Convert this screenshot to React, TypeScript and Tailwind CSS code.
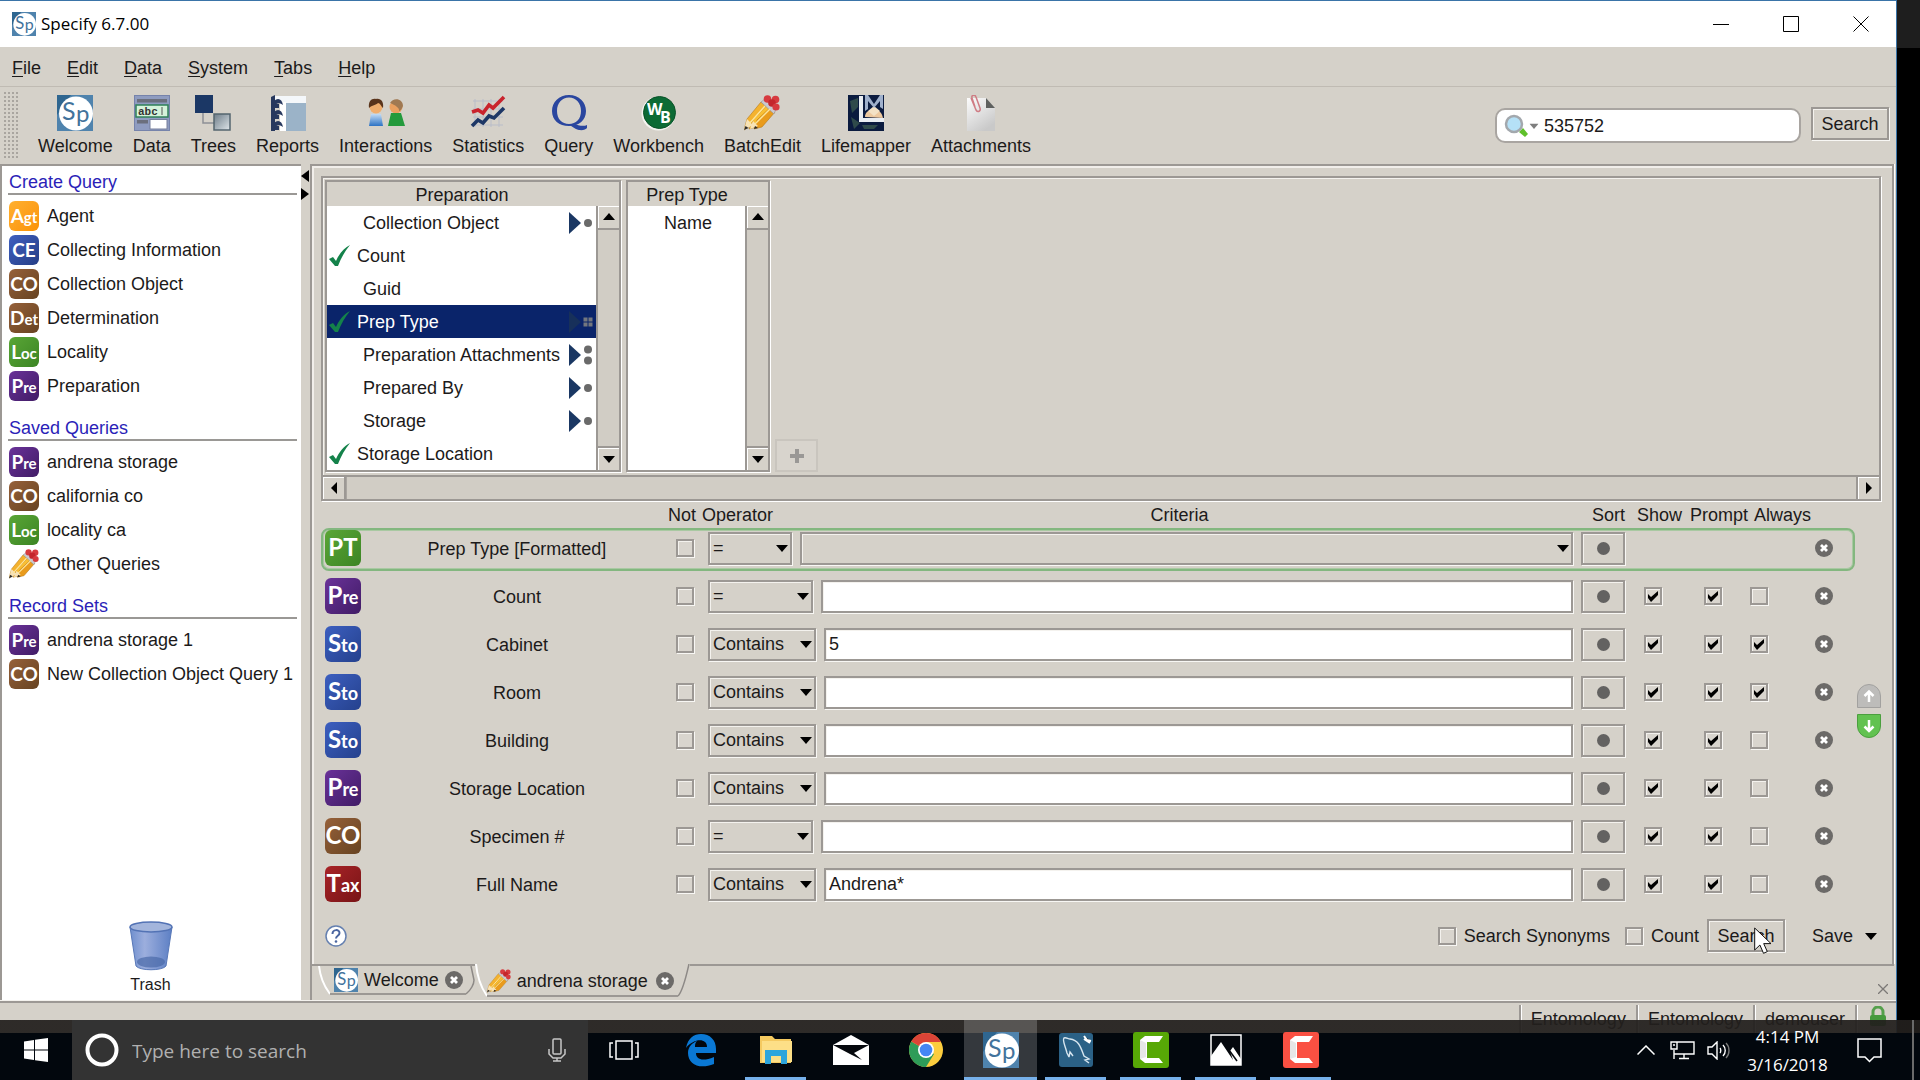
import { useState } from 'react'
import type { ReactNode } from 'react'

type BadgeKind = 'Agt' | 'CE' | 'CO' | 'Det' | 'Loc' | 'Pre' | 'PT' | 'Sto' | 'Tax'

interface SideItem {
  label: string
  badge?: BadgeKind
}

interface QueryField {
  badge: BadgeKind
  label: string
  operator: string
  width: string
  criteria: string
  show: boolean
  prompt: boolean
  always: boolean
}

const BEVEL = 'border-2 border-[#9c9894] shadow-[inset_1px_1px_0_#f4f2ee,1px_1px_0_#f8f7f4]'

const BADGE_COLORS: Record<BadgeKind, string> = {
  Agt: 'from-[#ffb02e] to-[#fb9200]',
  CE: 'from-[#3f5fc0] to-[#263f86]',
  CO: 'from-[#96613a] to-[#674321]',
  Det: 'from-[#96613a] to-[#674321]',
  Loc: 'from-[#5aa636] to-[#3c8524]',
  Pre: 'from-[#6a3299] to-[#411c66]',
  PT: 'from-[#5aa636] to-[#3c8524]',
  Sto: 'from-[#3c5fc0] to-[#25418d]',
  Tax: 'from-[#a82327] to-[#781416]',
}

const SIDE_SECTIONS: { title: string; items: SideItem[] }[] = [
  {
    title: 'Create Query',
    items: [
      { label: 'Agent', badge: 'Agt' },
      { label: 'Collecting Information', badge: 'CE' },
      { label: 'Collection Object', badge: 'CO' },
      { label: 'Determination', badge: 'Det' },
      { label: 'Locality', badge: 'Loc' },
      { label: 'Preparation', badge: 'Pre' },
    ],
  },
  {
    title: 'Saved Queries',
    items: [
      { label: 'andrena storage', badge: 'Pre' },
      { label: 'california co', badge: 'CO' },
      { label: 'locality ca', badge: 'Loc' },
      { label: 'Other Queries' },
    ],
  },
  {
    title: 'Record Sets',
    items: [
      { label: 'andrena storage 1', badge: 'Pre' },
      { label: 'New Collection Object Query 1', badge: 'CO' },
    ],
  },
]

const TREE_FIELDS = [
  { label: 'Collection Object', used: false, link: 'one' },
  { label: 'Count', used: true, link: '' },
  { label: 'Guid', used: false, link: '' },
  { label: 'Prep Type', used: true, link: 'selected' },
  { label: 'Preparation Attachments', used: false, link: 'many' },
  { label: 'Prepared By', used: false, link: 'one' },
  { label: 'Storage', used: false, link: 'one' },
  { label: 'Storage Location', used: true, link: '' },
]

const QUERY_FIELDS: QueryField[] = [
  { badge: 'Pre', label: 'Count', operator: '=', width: 'w-[105px]', criteria: '', show: true, prompt: true, always: false },
  { badge: 'Sto', label: 'Cabinet', operator: 'Contains', width: 'w-[108px]', criteria: '5', show: true, prompt: true, always: true },
  { badge: 'Sto', label: 'Room', operator: 'Contains', width: 'w-[108px]', criteria: '', show: true, prompt: true, always: true },
  { badge: 'Sto', label: 'Building', operator: 'Contains', width: 'w-[108px]', criteria: '', show: true, prompt: true, always: false },
  { badge: 'Pre', label: 'Storage Location', operator: 'Contains', width: 'w-[108px]', criteria: '', show: true, prompt: true, always: false },
  { badge: 'CO', label: 'Specimen #', operator: '=', width: 'w-[105px]', criteria: '', show: true, prompt: true, always: false },
  { badge: 'Tax', label: 'Full Name', operator: 'Contains', width: 'w-[108px]', criteria: 'Andrena*', show: true, prompt: true, always: false },
]

function SpecifyLogo({ className }: { className: string }) {
  return (
    <svg viewBox="0 0 36 36" className={className} aria-hidden="true">
      <rect width="36" height="36" fill="#4f83ad" />
      <path d="M0 0h14L0 20z" fill="#2f6690" />
      <circle cx="19" cy="18.500" r="17" fill="#fff" />
      <text x="5" y="25" fontFamily="Lato, sans-serif" fontSize="25" fontWeight="400" fill="#42739c">
        S
      </text>
      <text x="19" y="27" fontFamily="Lato, sans-serif" fontSize="24" fontWeight="400" fill="#42739c">
        p
      </text>
    </svg>
  )
}

function PencilsIcon({ className }: { className: string }) {
  return (
    <svg viewBox="0 0 36 36" className={className} aria-hidden="true">
      <g stroke="#b5791a" strokeWidth=".6">
        <path d="M0 35l3-11L17 7l6 5L8 30z" fill="#f4b22e" />
        <path d="M5 34l4-9L24 9l6 5L15 31z" fill="#f9bf33" />
        <path d="M10 34l3-9L27 12l4 5L18 32z" fill="#e99b1c" />
      </g>
      <path d="M3 24l6 6-9 5zM9 26l5 5-8 3z" fill="#f7e2b6" />
      <path d="M0 35l1.500-4 3 2zM10 34l1-3 3 2z" fill="#2b2b2b" />
      <path d="M17 7l4-3 11 10-2 5z" fill="#c9c9cf" stroke="#8b8b93" strokeWidth=".5" />
      <path d="M5 29L21 11M11 29L26 14" stroke="#fde59a" strokeWidth="1.500" />
      <circle cx="23.500" cy="4" r="3.800" fill="#d73a3f" />
      <circle cx="31.500" cy="4.500" r="3.800" fill="#d73a3f" />
      <circle cx="28" cy="8" r="3.800" fill="#c4262d" />
      <circle cx="32" cy="12" r="3.600" fill="#d73a3f" />
    </svg>
  )
}

function DataIcon() {
  return (
    <svg viewBox="0 0 36 36" className="size-9" aria-hidden="true">
      <rect x=".5" y=".5" width="35" height="35" fill="#8f9cc0" stroke="#7683ab" />
      <rect x="3" y="4" width="30" height="3.500" fill="#6b6f7d" />
      <rect x="2" y="10" width="32" height="12" fill="#d5f3da" stroke="#2f8058" strokeWidth="1.500" />
      <text x="4" y="20" fontFamily="Liberation Mono, monospace" fontSize="11" fontWeight="700" fill="#333">
        abc
      </text>
      <path d="M28 12v8" stroke="#555" />
      <rect x="3" y="25" width="11" height="3.500" fill="#6b6f7d" />
      <rect x="16" y="24.500" width="17" height="9.500" fill="#fff" stroke="#777f9c" />
    </svg>
  )
}

function TreesIcon() {
  return (
    <svg viewBox="0 0 36 36" className="size-9" aria-hidden="true">
      <defs>
        <linearGradient id="tree-node" x2="1" y2="1">
          <stop stopColor="#6d7c88" />
          <stop offset="1" stopColor="#dfe6ea" />
        </linearGradient>
      </defs>
      <path d="M8 18v10h11" fill="none" stroke="#8d9096" strokeWidth="1.500" />
      <rect width="18" height="18" fill="#1b3765" />
      <rect x="19" y="19" width="16" height="16" fill="url(#tree-node)" stroke="#54656f" strokeWidth="1.500" />
    </svg>
  )
}

function ReportsIcon() {
  return (
    <svg viewBox="0 0 36 36" className="size-9" aria-hidden="true">
      <path d="M4 1h32v7H4z" fill="#f4f7fa" />
      <path d="M10 7h6v29h-6z" fill="#fff" />
      <path d="M16 8h20v28H16z" fill="#9bb3c8" />
      <path d="M1 2l4-2v36H1z" fill="#27385e" />
      <path d="M4 6c4-4 8-2 9 4-4-3-6-2-9 1zM4 17c4-4 8-2 9 4-4-3-6-2-9 1zM4 28c4-4 8-2 9 4-4-3-6-2-9 1z" fill="#27385e" />
      <path d="M4 9h5v4H4zM4 20h5v4H4zM4 31h5v4H4z" fill="#27385e" />
    </svg>
  )
}

function InteractionsIcon() {
  return (
    <svg viewBox="0 0 40 36" className="h-9 w-10" aria-hidden="true">
      <defs>
        <linearGradient id="person-blue" y2="1" x2="0">
          <stop stopColor="#c3dcf5" />
          <stop offset="1" stopColor="#2c72c4" />
        </linearGradient>
      </defs>
      <circle cx="10" cy="12" r="6.500" fill="#f0ad6c" />
      <path d="M3 13c-1-7 3-10 7-9 5-1 8 3 7 9-2-2-3-5-5-5-2 2-6 2-9 5z" fill="#5a341b" />
      <path d="M5 19h10l2 12H3z" fill="url(#person-blue)" />
      <circle cx="30" cy="12" r="6.500" fill="#e9a060" />
      <path d="M24 8c3-6 13-5 13 3-1 3-3 5-4 5 1-3-4-6-9-8z" fill="#a07952" />
      <path d="M25 18h10l4 13H22z" fill="#249a3c" />
    </svg>
  )
}

function StatisticsIcon() {
  return (
    <svg viewBox="0 0 36 36" className="size-9" aria-hidden="true">
      <path d="M3 6h30M3 14h30M3 22h30M3 30h30M5 4v28M13 4v28M21 4v28M29 4v28" stroke="#b9bdc9" />
      <path d="M2 17l6-2 5 3 6-8 4 3 11-11" fill="none" stroke="#c9232d" strokeWidth="3.600" />
      <path d="M2 31l6-6 5 3 6-7 5 2 10-10" fill="none" stroke="#1d3766" strokeWidth="3.600" />
    </svg>
  )
}

function QueryIcon() {
  return (
    <svg viewBox="0 0 36 36" className="size-9" aria-hidden="true">
      <path
        d="M18 0c10 0 17 7 17 16S28 31 18 31 1 25 1 16 8 0 18 0zm0 2.500C11 2.500 6 8 6 16s5 13 12 13 12-5 12-13S25 2.500 18 2.500z"
        fill="#2a469f"
        fillRule="evenodd"
      />
      <path d="M12 30c6-3 10 4 16 5 4 .5 7-.5 8-2v-3c-4 2-9 0-13-1z" fill="#2a469f" />
    </svg>
  )
}

function WorkbenchIcon() {
  return (
    <svg viewBox="0 0 36 36" className="size-9" aria-hidden="true">
      <circle cx="17.500" cy="18.500" r="17" fill="#f4f4f0" />
      <circle cx="18.500" cy="17.500" r="16" fill="#0c6b35" stroke="#0a5228" />
      <text x="6" y="20" fontFamily="Open Sans, sans-serif" fontSize="16" fontWeight="700" fill="#fff">
        W
      </text>
      <text x="19" y="28" fontFamily="Open Sans, sans-serif" fontSize="16" fontWeight="700" fill="#fff">
        B
      </text>
    </svg>
  )
}

function LifemapperIcon() {
  return (
    <svg viewBox="0 0 36 36" className="size-9" aria-hidden="true">
      <rect width="36" height="36" fill="#0b1b3f" />
      <path d="M2 6l8-3v9l-6 6zM3 22l9 6-6 6zM14 30h16l-4 4H16z" fill="#2f4a4a" />
      <path d="M17 22c0-5 5-8 9-6 5-2 8 2 9 7z" fill="#edc9a0" />
      <path d="M20 16l6-5 6 5-6 5z" fill="#f4e2c6" />
      <path d="M11 1h4v22h21v4H11z" fill="#e9edf2" />
      <path d="M17 0h3l6 9 6-9h3v14l-3-2V6l-6 7-6-7v8l-3 2z" fill="#9fb0cc" />
    </svg>
  )
}

function AttachmentsIcon() {
  return (
    <svg viewBox="0 0 36 36" className="size-9" aria-hidden="true">
      <defs>
        <linearGradient id="sheet" x2=".6" y2="1">
          <stop stopColor="#fcfcfc" />
          <stop offset="1" stopColor="#c9c9c9" />
        </linearGradient>
      </defs>
      <path d="M4 3h19l9 10v23H4z" fill="url(#sheet)" />
      <path d="M23 3l9 10h-9z" fill="#5e605e" />
      <path d="M8 3l5 12c2 3 5 1 4-2L13 2c-1-3-5-2-4 1l3 9" fill="none" stroke="#cf7c84" strokeWidth="1.500" />
    </svg>
  )
}

const TOOLS: { label: string; icon: ReactNode }[] = [
  { label: 'Welcome', icon: <SpecifyLogo className="size-9" /> },
  { label: 'Data', icon: <DataIcon /> },
  { label: 'Trees', icon: <TreesIcon /> },
  { label: 'Reports', icon: <ReportsIcon /> },
  { label: 'Interactions', icon: <InteractionsIcon /> },
  { label: 'Statistics', icon: <StatisticsIcon /> },
  { label: 'Query', icon: <QueryIcon /> },
  { label: 'Workbench', icon: <WorkbenchIcon /> },
  { label: 'BatchEdit', icon: <PencilsIcon className="size-9" /> },
  { label: 'Lifemapper', icon: <LifemapperIcon /> },
  { label: 'Attachments', icon: <AttachmentsIcon /> },
]

function Badge({ kind, large }: { kind: BadgeKind; large?: boolean }) {
  const allCaps = kind === 'CO' || kind === 'CE' || kind === 'PT'
  const size = large ? 'size-9 text-[24px]' : 'size-[30px] text-[19px]'
  const rest = large ? 'text-[18px]' : 'text-[15px]'
  return (
    <span
      className={`flex shrink-0 items-center justify-center overflow-hidden rounded-md bg-linear-to-br pb-0.5 font-[Lato,sans-serif] leading-none font-bold text-white ${size} ${BADGE_COLORS[kind]}`}
      aria-hidden="true"
    >
      <span>
        {kind[0]}
        <span className={allCaps ? '' : rest}>{kind.slice(1)}</span>
      </span>
    </span>
  )
}

function Triangle({ dir, className = '' }: { dir: 'up' | 'down' | 'left' | 'right'; className?: string }) {
  const paths = { up: 'M0 9l6-7 6 7z', down: 'M0 3h12l-6 7z', left: 'M9 0v12L3 6z', right: 'M3 0v12l6-6z' }
  return (
    <svg viewBox="0 0 12 12" className={`size-3 ${className}`} aria-hidden="true">
      <path d={paths[dir]} fill="#000" />
    </svg>
  )
}

function CloseGlyph() {
  return (
    <svg viewBox="0 0 18 18" className="size-[18px]" aria-hidden="true">
      <circle cx="9" cy="9" r="9" fill="#6c6a68" />
      <path d="M6 6l6 6M12 6l-6 6" stroke="#fff" strokeWidth="2.800" />
    </svg>
  )
}

function CheckBox({ label, defaultChecked }: { label: string; defaultChecked?: boolean }) {
  return (
    <span className="grid shrink-0">
      <input
        type="checkbox"
        aria-label={label}
        defaultChecked={defaultChecked}
        className={`peer col-start-1 row-start-1 size-[18px] appearance-none bg-[#d9d5ce] ${BEVEL}`}
      />
      <svg
        viewBox="0 0 18 18"
        className="pointer-events-none col-start-1 row-start-1 hidden size-[18px] peer-checked:block"
        aria-hidden="true"
      >
        <path d="M4 7l3 3 7-6v4l-7 7-3-4z" fill="#000" />
      </svg>
    </span>
  )
}

function Combo({ label, value, className }: { label: string; value: string; className: string }) {
  return (
    <span className={`grid items-center ${className}`}>
      <select
        aria-label={label}
        defaultValue={value}
        className={`col-start-1 row-start-1 h-[33px] w-full appearance-none bg-[#d5d1c9] pl-[3px] ${BEVEL}`}
      >
        <option>{value}</option>
      </select>
      <Triangle dir="down" className="pointer-events-none col-start-1 row-start-1 mr-1 justify-self-end" />
    </span>
  )
}

function SortButton() {
  return (
    <button
      type="button"
      aria-label="Sort"
      className={`ml-2 flex h-[33px] w-11 shrink-0 items-center justify-center ${BEVEL}`}
    >
      <span className="size-[13px] rounded-full bg-[#636261]" />
    </button>
  )
}

function QueryRow({ field }: { field: QueryField }) {
  return (
    <div className="flex h-[43px] items-start border-2 border-transparent">
      <div className="flex h-9 flex-1 items-center pl-0.5">
        <Badge kind={field.badge} large />
        <span className="w-[315px] pt-0.5 pr-[3px] text-center">{field.label}</span>
        <CheckBox label={`Not ${field.label}`} />
        <Combo label="Operator" value={field.operator} className={`ml-3.5 shrink-0 ${field.width}`} />
        <input
          type="text"
          aria-label={`${field.label} criteria`}
          defaultValue={field.criteria}
          className={`ml-2 h-[33px] min-w-0 flex-1 bg-white px-[3px] ${BEVEL}`}
        />
        <SortButton />
        <div className="ml-[19px] flex">
          <CheckBox label="Show" defaultChecked={field.show} />
        </div>
        <div className="ml-[42px] flex">
          <CheckBox label="Prompt" defaultChecked={field.prompt} />
        </div>
        <div className="ml-7 flex">
          <CheckBox label="Always" defaultChecked={field.always} />
        </div>
        <button type="button" aria-label="Remove" className="mr-5 ml-[47px]">
          <CloseGlyph />
        </button>
      </div>
    </div>
  )
}

function LinkMark({ kind }: { kind: string }) {
  if (!kind) return null
  const selected = kind === 'selected'
  return (
    <svg viewBox="0 0 24 22" className="h-[22px] w-6 shrink-0" aria-hidden="true">
      <path d="M0 0l12 11L0 22z" fill={selected ? '#17305a' : '#1a3763'} />
      {kind === 'one' && <circle cx="19" cy="11" r="4" fill="#6a6a6a" />}
      {kind === 'many' && (
        <>
          <circle cx="19" cy="5.500" r="4" fill="#6a6a6a" />
          <circle cx="19" cy="16.500" r="4" fill="#6a6a6a" />
        </>
      )}
      {selected && <path d="M14.500 6.500h4v4h-4zM19.500 6.500h4v4h-4zM14.500 11.500h4v4h-4zM19.500 11.500h4v4h-4z" fill="#73777f" />}
    </svg>
  )
}

function VScroll() {
  return (
    <div className="flex w-[23px] flex-col border-l-2 border-[#9c9894]">
      <button type="button" aria-label="Scroll up" className="flex h-6 items-center justify-center border-b-2 border-[#9c9894] shadow-[inset_1px_1px_0_#fff]">
        <Triangle dir="up" />
      </button>
      <div className="flex-1 bg-[#d1cdc5]" />
      <button type="button" aria-label="Scroll down" className="flex h-6 items-center justify-center border-t-2 border-[#9c9894] shadow-[inset_1px_1px_0_#fff]">
        <Triangle dir="down" />
      </button>
    </div>
  )
}

function FieldTree() {
  const [selected, setSelected] = useState('Prep Type')
  return (
    <section className="border-2 border-[#9c9894] shadow-[inset_1px_1px_0_#f4f2ee,1px_1px_0_#fff]">
      <div className="flex gap-[5px] p-[2px]">
        <div className="flex w-[296px] flex-col border-2 border-[#9c9894] shadow-[1px_1px_0_#fff]">
          <h2 className="h-6 pr-[22px] text-center leading-[26px]">Preparation</h2>
          <div className="flex flex-1">
            <ul className="flex-1 bg-white">
              {TREE_FIELDS.map((f) => (
                <li key={f.label}>
                  <button
                    type="button"
                    onClick={() => setSelected(f.label)}
                    className={`flex h-[33px] w-full items-center pr-[3px] pl-0.5 whitespace-nowrap ${
                      f.label === selected ? 'bg-[#0a246a] text-white' : ''
                    }`}
                  >
                    {f.used ? (
                      <svg viewBox="0 0 22 22" className="mr-1.5 size-[22px] shrink-0" aria-hidden="true">
                        <path d="M0 14l4-2 3 4C10 9 15 3 21 0c-5 6-9 13-12 21H6z" fill="#14824a" />
                      </svg>
                    ) : (
                      <span className="w-[34px] shrink-0" />
                    )}
                    <span className="flex-1 text-left">{f.label}</span>
                    <LinkMark kind={f.link} />
                  </button>
                </li>
              ))}
            </ul>
            <VScroll />
          </div>
        </div>
        <div className="flex w-[144px] flex-col border-2 border-[#9c9894] shadow-[1px_1px_0_#fff]">
          <h2 className="h-6 pr-[22px] text-center leading-[26px]">Prep Type</h2>
          <div className="flex flex-1">
            <ul className="flex-1 bg-white">
              <li className="flex h-[33px] items-center pl-9">Name</li>
            </ul>
            <VScroll />
          </div>
        </div>
        <button
          type="button"
          aria-label="Add field"
          disabled
          className="flex h-[33px] w-[43px] items-center justify-center self-end border-2 border-[#c9c5be] bg-[#d8d4cd]"
        >
          <svg viewBox="0 0 14 14" className="size-3.5" aria-hidden="true">
            <path d="M5 0h4v5h5v4H9v5H5V9H0V5h5z" fill="#9a9896" />
          </svg>
        </button>
      </div>
      <div className="mt-px flex h-6 border-t-2 border-[#9c9894]">
        <button type="button" aria-label="Scroll left" className="flex w-[23px] items-center justify-center border-r-2 border-[#9c9894] shadow-[inset_1px_1px_0_#fff]">
          <Triangle dir="left" />
        </button>
        <div className="flex-1 border-l border-[#a9a5a0] bg-[#d1cdc5]" />
        <button type="button" aria-label="Scroll right" className="flex w-[23px] items-center justify-center border-l-2 border-[#9c9894] shadow-[inset_1px_1px_0_#fff]">
          <Triangle dir="right" />
        </button>
      </div>
    </section>
  )
}

function QueryForm() {
  return (
    <div className="flex flex-1">
      <div className="flex flex-1 flex-col">
        <div className="flex h-[27px] items-center whitespace-nowrap">
          <span className="ml-[347px]">Not</span>
          <span className="ml-1.5">Operator</span>
          <span className="flex-1 pl-1.5 text-center">Criteria</span>
          <span className="ml-3">Sort</span>
          <span className="ml-3">Show</span>
          <span className="ml-2">Prompt</span>
          <span className="mr-[44px] ml-1.5">Always</span>
        </div>
        <div className="flex flex-col gap-[5px]">
          <div className="flex h-[43px] items-start rounded-lg border-2 border-[#83b77f] shadow-[inset_0_0_0_1px_#a9c9a2]">
            <div className="flex h-9 flex-1 items-center pl-0.5">
              <Badge kind="PT" large />
              <span className="w-[315px] pt-0.5 pr-[3px] text-center">Prep Type [Formatted]</span>
              <CheckBox label="Not Prep Type" />
              <Combo label="Operator" value="=" className="ml-3.5 w-[84px] shrink-0" />
              <Combo label="Prep Type criteria" value="" className="ml-2 flex-1" />
              <SortButton />
              <button type="button" aria-label="Remove" className="mr-5 ml-[190px]">
                <CloseGlyph />
              </button>
            </div>
          </div>
          {QUERY_FIELDS.map((f) => (
            <QueryRow key={f.label} field={f} />
          ))}
        </div>
      </div>
      <div className="flex w-[26px] flex-col items-end justify-center gap-1.5 pt-3.5">
        <button type="button" aria-label="Move up">
          <svg viewBox="0 0 24 24" className="size-6">
            <path d="M.5 23.500V12a11.500 11.500 0 0 1 23 0v11.500z" fill="#bdbcba" stroke="#a2a19f" />
            <path d="M12 18V8M7.500 12L12 7.500l4.500 4.500" fill="none" stroke="#fff" strokeWidth="2.500" />
          </svg>
        </button>
        <button type="button" aria-label="Move down">
          <svg viewBox="0 0 24 24" className="size-6">
            <path d="M.5.5V12a11.500 11.500 0 0 0 23 0V.5z" fill="#62c250" stroke="#4b9f3e" />
            <path d="M12 6v11M7.500 12.500L12 17l4.500-4.500" fill="none" stroke="#fff" strokeWidth="2.500" />
          </svg>
        </button>
      </div>
    </div>
  )
}

function FormFooter() {
  return (
    <div className="flex h-[57px] items-center pr-1">
      <button type="button" aria-label="Help" className="ml-1">
        <svg viewBox="0 0 22 22" className="size-[22px]">
          <circle cx="11" cy="11" r="10" fill="#fff" stroke="#6580b0" strokeWidth="1.500" />
          <path d="M7.500 9c0-5 7-5 7-1 0 3-3.500 2.500-3.500 5.500" fill="none" stroke="#4a65a0" strokeWidth="2" />
          <circle cx="11" cy="16.500" r="1.300" fill="#4a65a0" />
        </svg>
      </button>
      <label className="ml-auto flex items-center gap-2">
        <CheckBox label="Search Synonyms" />
        Search Synonyms
      </label>
      <label className="ml-[15px] flex items-center gap-2">
        <CheckBox label="Count" />
        Count
      </label>
      <div className="relative ml-2">
        <button type="button" className={`h-[33px] w-[78px] ${BEVEL}`}>
          Search
        </button>
        <svg viewBox="0 0 18 27" className="pointer-events-none absolute top-2 left-[47px] h-[27px] w-[18px]" aria-hidden="true">
          <path d="M.7 1v22l5.200-5 3.600 8.300 3.800-1.700-3.600-8h7.300z" fill="#fff" stroke="#111" />
        </svg>
      </div>
      <button type="button" className="ml-[27px] flex items-center gap-3">
        Save
        <Triangle dir="down" />
      </button>
    </div>
  )
}

function TabStrip() {
  return (
    <div className="flex h-[37px] items-start">
      <span className="w-1.5 border-t-2 border-[#9c9894]" />
      <div className="flex h-[31px] border-t-2 border-[#9c9894]">
        <svg viewBox="0 0 12 29" className="h-[29px] w-3" aria-hidden="true">
          <path d="M1 0c1 9 4 19 11 28" fill="none" stroke="#fff" strokeWidth="2" />
        </svg>
        <div className="flex items-center border-b-2 border-[#9c9894] pr-[3px] pl-1">
          <button type="button" className="flex items-center gap-1.5">
            <SpecifyLogo className="size-6" />
            Welcome
          </button>
          <button type="button" aria-label="Close Welcome" className="ml-1.5">
            <CloseGlyph />
          </button>
        </div>
        <svg viewBox="0 0 9 29" className="h-[29px] w-[9px]" aria-hidden="true">
          <path d="M0 28c5-4 8-10 8-14L5 0" fill="none" stroke="#8d8986" strokeWidth="1.500" />
        </svg>
      </div>
      <div className="flex h-[33px]">
        <svg viewBox="0 0 12 33" className="h-[33px] w-3" aria-hidden="true">
          <path d="M1 0c1 11 4 22 11 32" fill="none" stroke="#fff" strokeWidth="2" />
        </svg>
        <div className="flex items-center border-b-2 border-[#9c9894] pt-0.5 pr-1">
          <button type="button" className="flex items-center gap-1.5">
            <PencilsIcon className="size-6" />
            andrena storage
          </button>
          <button type="button" aria-label="Close andrena storage" className="ml-2">
            <CloseGlyph />
          </button>
        </div>
        <svg viewBox="0 0 12 33" className="h-[33px] w-3" aria-hidden="true">
          <path d="M0 32c5-5 8-19 11-32" fill="none" stroke="#8d8986" strokeWidth="1.500" />
        </svg>
      </div>
      <div className="flex h-9 flex-1 items-end justify-end border-t-2 border-[#9c9894] pr-1.5 pb-1.5">
        <button type="button" aria-label="Close tab">
          <svg viewBox="0 0 10 10" className="size-2.5">
            <path d="M0 0l10 10M10 0L0 10" stroke="#7c7977" strokeWidth="1.300" />
          </svg>
        </button>
      </div>
    </div>
  )
}

function Sidebar() {
  return (
    <aside className="flex w-[301px] shrink-0 flex-col border-t-2 border-l-2 border-[#9c9894] bg-white pt-[3px] pr-1 pl-1.5 whitespace-nowrap">
      {SIDE_SECTIONS.map((section) => (
        <section key={section.title} className="pb-3.5">
          <h2 className="h-[26px] border-b-2 border-[#9a9895] pl-px leading-[26px] text-[#2b1fb8]">{section.title}</h2>
          <ul className="flex flex-col gap-1 pt-1.5 pl-px">
            {section.items.map((item) => (
              <li key={item.label}>
                <a href="#" className="flex items-center gap-2">
                  {item.badge ? <Badge kind={item.badge} /> : <PencilsIcon className="size-[30px]" />}
                  {item.label}
                </a>
              </li>
            ))}
          </ul>
        </section>
      ))}
      <a href="#" className="mt-auto mr-1 mb-1 flex flex-col items-center gap-0.5 text-base">
        <svg viewBox="0 0 44 50" className="h-[50px] w-11" aria-hidden="true">
          <defs>
            <linearGradient id="bin" x2="1">
              <stop stopColor="#6f8fce" />
              <stop offset=".35" stopColor="#9caedd" />
              <stop offset="1" stopColor="#5c7fc4" />
            </linearGradient>
          </defs>
          <path d="M1 6l6 39c4 5 26 5 30 0l6-39z" fill="url(#bin)" stroke="#5878b8" />
          <ellipse cx="22" cy="41" rx="14" ry="5.500" fill="#4a69a8" opacity=".7" />
          <ellipse cx="22" cy="6" rx="21" ry="5" fill="#a3b5dc" stroke="#5373b5" strokeWidth="1.500" />
        </svg>
        Trash
      </a>
    </aside>
  )
}

function TaskItem({ label, open, active, children }: { label: string; open?: boolean; active?: boolean; children: ReactNode }) {
  return (
    <button
      type="button"
      aria-label={label}
      className={`flex w-[73px] flex-col items-center ${active ? 'bg-white/20' : ''}`}
    >
      <span className="flex flex-1 items-center pt-0.5">{children}</span>
      <span className={`h-[3px] ${active ? 'w-full' : 'w-[61px]'} ${open ? 'bg-[#76b0ea]' : ''}`} />
    </button>
  )
}

function CamtasiaIcon({ color }: { color: string }) {
  return (
    <svg viewBox="0 0 36 36" className="size-9" aria-hidden="true">
      <rect width="36" height="36" rx="3" fill={color} />
      <path d="M7 8l5-4h18l-4 6H14v16h12l4 5H12l-5-4z" fill="#fff" />
      <path d="M7 8l6 3v14l-6 2z" fill="#e6e6e6" />
    </svg>
  )
}

function Taskbar() {
  return (
    <footer className="relative -mt-[13px] flex h-[60px] bg-[linear-gradient(#221f1dee_13px,#02070d_13px)] font-['Open_Sans','Noto_Sans',sans-serif] text-white">
      <button type="button" aria-label="Start" className="flex w-[72px] items-center justify-center">
        <svg viewBox="0 0 24 24" className="size-6">
          <path d="M0 3.500L10 2v9.500H0zM11 1.800L24 0v11.500H11zM0 12.500h10V22L0 20.500zM11 12.500h13V24l-13-1.800z" fill="#fff" />
        </svg>
      </button>
      <label className="flex w-[516px] items-center bg-[#333]">
        <svg viewBox="0 0 34 34" className="ml-[13px] size-[34px]" aria-hidden="true">
          <circle cx="17" cy="17" r="14.500" fill="none" stroke="#fff" strokeWidth="4" />
        </svg>
        <input
          type="text"
          aria-label="Type here to search"
          placeholder="Type here to search"
          className="ml-[13px] min-w-0 flex-1 bg-transparent pt-0.5 text-[19px] placeholder:text-[#b0b0b0]"
        />
        <svg viewBox="0 0 18 24" className="mr-[22px] h-6 w-[18px]" fill="none" stroke="#c8c8c8" strokeWidth="1.500" aria-hidden="true">
          <rect x="5" y="1" width="8" height="15" rx="1" />
          <path d="M1 11v5l4 4h8l4-4v-5M9 20v3M5 23h8" />
        </svg>
      </label>
      <button type="button" aria-label="Task View" className="mr-1 flex w-[72px] items-center justify-center">
        <svg viewBox="0 0 30 20" className="h-5 w-[30px]" fill="none" stroke="#fff" strokeWidth="1.500">
          <path d="M7 1h16v18H7zM4 3H1v14h3M26 3h3v14h-3" />
        </svg>
      </button>
      <div className="flex gap-[2px]">
        <TaskItem label="Edge">
          <svg viewBox="0 0 32 34" className="h-[34px] w-8">
            <path d="M1 15C3 5 9 1 16 1c9 0 15 6 15 15v4H11c0 6 6 9 18 4v7c-15 6-26 0-26-11 0-6 4-10 9-12-2 2-2 4-2 6h12c0-9-13-9-21 1z" fill="#0a78d4" />
          </svg>
        </TaskItem>
        <TaskItem label="File Explorer" open>
          <svg viewBox="0 0 32 28" className="h-7 w-8">
            <path d="M0 0h12l3 3h16v24H0z" fill="#f5ca61" />
            <path d="M2 5h30v21H2z" fill="#fddf87" />
            <path d="M5 14h22v14h-6v-8H11v8H5z" fill="#2ea5dc" />
          </svg>
        </TaskItem>
        <TaskItem label="Mail">
          <svg viewBox="0 0 36 30" className="h-[30px] w-9">
            <path d="M0 10L18 0l18 10v20H0z" fill="#fff" />
            <path d="M0 10h36L21 18l8 7-12-6z" fill="#05080d" />
          </svg>
        </TaskItem>
        <TaskItem label="Chrome">
          <svg viewBox="0 0 34 34" className="size-[34px]">
            <circle cx="17" cy="17" r="17" fill="#fccd3e" />
            <path d="M17 17L2.300 8.500A17 17 0 0 0 17 34l8-13z" fill="#2e9c58" />
            <path d="M2.300 8.500A17 17 0 0 1 32 9H17v8z" fill="#dc4437" />
            <circle cx="17" cy="17" r="8" fill="#fff" />
            <circle cx="17" cy="17" r="6.300" fill="#4486f4" />
          </svg>
        </TaskItem>
        <TaskItem label="Specify" open active>
          <SpecifyLogo className="size-9" />
        </TaskItem>
        <TaskItem label="MySQL Workbench" open>
          <svg viewBox="0 0 34 34" className="size-[34px]">
            <rect width="34" height="34" rx="3" fill="#2b6186" />
            <path d="M10 24L8 20C6 12 3 7 5 5c2-1 4 1 6 1 9 1 11 9 14 17l5 3-4 1 4 3M10 24l1-5 3 4" fill="none" stroke="#d7e6f0" strokeWidth="1.400" />
            <path d="M25 3l3 4 4 1M25 6l6 4" stroke="#fff" strokeWidth="2" />
          </svg>
        </TaskItem>
        <TaskItem label="Camtasia" open>
          <CamtasiaIcon color="#57a806" />
        </TaskItem>
        <TaskItem label="Photos" open>
          <svg viewBox="0 0 32 32" className="size-8">
            <rect x="1" y="1" width="30" height="30" fill="#05080d" stroke="#fff" strokeWidth="1.500" />
            <path d="M1 31V22L11 8l10 15 2 3-3-9 3-4 8 12v6z" fill="#fff" />
            <path d="M19 16l8 11" stroke="#05080d" strokeWidth="1.500" />
          </svg>
        </TaskItem>
        <TaskItem label="Camtasia Recorder" open>
          <CamtasiaIcon color="#fa5042" />
        </TaskItem>
      </div>
      <div className="ml-auto flex items-center">
        <svg viewBox="0 0 18 10" className="h-2.5 w-[18px]" fill="none" stroke="#fff" strokeWidth="1.500" aria-hidden="true">
          <path d="M.5 9.500L9 1l8.500 8.500" />
        </svg>
        <svg viewBox="0 0 25 19" className="ml-[15px] h-[19px] w-[25px]" fill="none" stroke="#fff" strokeWidth="1.400" aria-hidden="true">
          <path d="M7 1h17v12H4V9M1 1h6v7H1zM3 4h2M4 9v9M14 13v4M9 17.500h10" />
        </svg>
        <svg viewBox="0 0 23 19" className="ml-3 h-[19px] w-[23px]" fill="none" stroke="#fff" strokeWidth="1.400" aria-hidden="true">
          <path d="M1 6h4l5-5v17l-5-5H1zM13 7c1 1 1 4 0 5M16 4c3 3 3 8 0 11" />
          <path d="M19 2c4 4 4 11 0 15" stroke="#777" />
        </svg>
        <div className="ml-3.5 flex w-[87px] flex-col items-center pt-0.5 text-[17px] leading-7">
          <time>4:14 PM</time>
          <time>3/16/2018</time>
        </div>
        <svg viewBox="0 0 25 25" className="ml-[26px] size-[25px]" fill="none" stroke="#fff" strokeWidth="1.500" aria-hidden="true">
          <path d="M1 1h23v18h-7l-4.500 4.500L8 19H1z" />
        </svg>
        <span className="mr-1.5 ml-[30px] h-[60px] w-[2px] bg-[#6a6a6a]" />
      </div>
    </footer>
  )
}

export default function App() {
  return (
    <div className="flex min-h-screen flex-col bg-black font-['Liberation_Sans',Arial,sans-serif] text-[18px] leading-6 text-[#1c1a1a]">
      <div className="flex flex-1">
        <div className="flex flex-1 flex-col border-t border-r border-[#3a74a8] bg-[#d5d1c9]">
          <header className="flex h-[46px] items-center bg-white pl-3 font-['Open_Sans','Noto_Sans',sans-serif] text-black">
            <SpecifyLogo className="size-6" />
            <h1 className="ml-[5px] text-[17px]">Specify 6.7.00</h1>
            <div className="mr-[27px] ml-auto flex gap-[54px]">
              {[
                { name: 'Minimize', d: 'M0 8.500h16' },
                { name: 'Maximize', d: 'M.5.5h15v15H.5z' },
                { name: 'Close', d: 'M.5.5l15 15M15.500.5l-15 15' },
              ].map((b) => (
                <button type="button" key={b.name} aria-label={b.name}>
                  <svg viewBox="0 0 16 16" className="size-4" fill="none" stroke="#000">
                    <path d={b.d} />
                  </svg>
                </button>
              ))}
            </div>
          </header>

          <nav className="flex h-10 items-center gap-[26px] border-b border-[#c0bbb3] pt-0.5 pl-3">
            {['File', 'Edit', 'Data', 'System', 'Tabs', 'Help'].map((m) => (
              <button type="button" key={m}>
                <span className="underline underline-offset-2">{m[0]}</span>
                {m.slice(1)}
              </button>
            ))}
          </nav>

          <div className="flex h-[77px] items-start">
            <div className="mt-1 ml-[3px] h-[68px] w-4 bg-[radial-gradient(#a9a59f_1px,transparent_1px)] bg-size-[4px_4px]" />
            <div className="ml-[19px] flex gap-5 pt-2">
              {TOOLS.map((tool) => (
                <button type="button" key={tool.label} className="flex flex-col items-center gap-[3px]">
                  {tool.icon}
                  {tool.label}
                </button>
              ))}
            </div>
            <div className="mt-[21px] ml-auto flex h-[35px] w-[306px] items-center rounded-[10px] border-2 border-[#a9a5a1] bg-white pl-[7px]">
              <svg viewBox="0 0 24 24" className="size-6" aria-hidden="true">
                <path d="M15 18l4-4 5 6-3 3z" fill="#5fc02a" />
                <circle cx="10" cy="10" r="8" fill="#b5e1f7" stroke="#a3a8ad" strokeWidth="2.500" />
              </svg>
              <Triangle dir="down" className="scale-75 opacity-50" />
              <input type="text" aria-label="Express search" defaultValue="535752" className="ml-1 min-w-0 flex-1 bg-transparent" />
            </div>
            <button type="button" className={`mt-5 mr-[7px] ml-2.5 h-[33px] w-[78px] ${BEVEL}`}>
              Search
            </button>
          </div>

          <div className="flex flex-1">
            <Sidebar />
            <div className="flex w-[9px] shrink-0 flex-col gap-1.5 pt-1.5">
              <svg viewBox="0 0 8 12" className="h-3 w-2" aria-hidden="true">
                <path d="M8 0v12L0 6z" />
              </svg>
              <svg viewBox="0 0 8 12" className="h-3 w-2" aria-hidden="true">
                <path d="M0 0v12l8-6z" />
              </svg>
            </div>
            <main className="mr-[2px] flex flex-1 flex-col border-l-2 border-[#9c9894]">
              <div className="flex flex-1 flex-col border-t-2 border-r-2 border-[#9c9894] pt-2.5 pr-[11px] pl-[9px] shadow-[inset_2px_2px_0_#f1eeea,1px_0_0_#fff]">
                <FieldTree />
                <QueryForm />
                <FormFooter />
              </div>
              <TabStrip />
            </main>
          </div>

          <div className="flex h-8 justify-end border-t-2 border-[#9c9894] shadow-[0_-1px_0_#f4f2ee]">
            <div className="mt-0.5 mr-[9px] flex">
              <span className="border-l-2 border-[#9c9894] px-2.5 pt-0.5 shadow-[inset_1px_0_0_#fff]">Entomology</span>
              <span className="border-l-2 border-[#9c9894] px-2.5 pt-0.5 shadow-[inset_1px_0_0_#fff]">Entomology</span>
              <span className="border-l-2 border-[#9c9894] px-2.5 pt-0.5 shadow-[inset_1px_0_0_#fff]">demouser</span>
              <span className="border-l-2 border-[#9c9894] pt-px pl-3 shadow-[inset_1px_0_0_#fff]">
                <svg viewBox="0 0 18 20" className="h-5 w-[18px]" aria-hidden="true">
                  <path d="M4 10V6a5 5 0 0 1 10 0v4" fill="none" stroke="#55a04c" strokeWidth="3" />
                  <rect x="1" y="9" width="16" height="11" rx="2" fill="#469a3e" />
                </svg>
              </span>
            </div>
          </div>
        </div>
        <div className="h-12 w-[23px] shrink-0 bg-[#1e1e1e]" />
      </div>
      <Taskbar />
    </div>
  )
}
